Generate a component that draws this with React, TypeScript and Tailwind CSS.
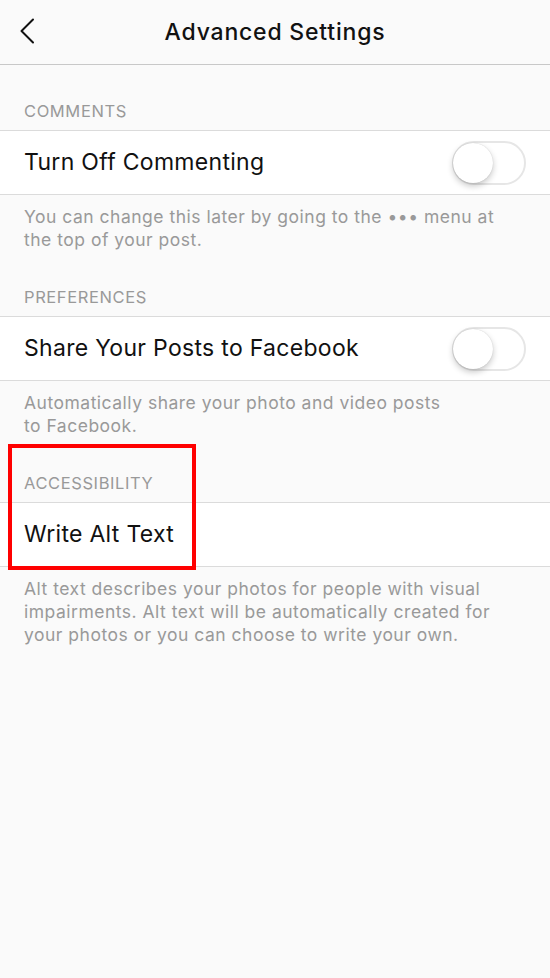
import React from "react";

const font = { fontFamily: "Inter, 'Noto Sans', sans-serif" };

function SectionHeader({ label }: { label: string }) {
  return (
    <div className="h-[65px] flex items-end px-6 pb-[10px]">
      <span className="text-[16.5px] leading-[18px] text-[#999999] tracking-[0.6px]">{label}</span>
    </div>
  );
}

function Toggle() {
  return (
    <div className="w-[74px] h-[44px] rounded-full border-2 border-[#e6e6e6] bg-white relative">
      <div className="absolute left-[-1px] top-[0px] w-[40px] h-[40px] rounded-full bg-white shadow-[0_3px_6px_rgba(0,0,0,0.22),0_0_1px_rgba(0,0,0,0.2)]" />
    </div>
  );
}

function Row({ title, toggle }: { title: string; toggle?: boolean }) {
  return (
    <div className="h-[65px] bg-white border-y border-[#dbdbdb] flex items-center justify-between pl-6 pr-6">
      <span className="text-[23px] tracking-[0.3px] text-[#111111]">{title}</span>
      {toggle && <Toggle />}
    </div>
  );
}

function Description({ children }: { children: React.ReactNode }) {
  return (
    <p className="pl-6 pr-[40px] pt-[10px] text-[17.5px] leading-[23px] tracking-[0.5px] text-[#999999]">{children}</p>
  );
}

export default function App() {
  return (
    <div className="relative w-[550px] h-[978px] bg-[#fafafa]" style={font}>
      {/* Nav bar */}
      <div className="h-[65px] border-b border-[#c8c8c8] flex items-center relative">
        <svg className="absolute left-[18px] top-[18px]" width="20" height="26" viewBox="0 0 20 26" fill="none">
          <polyline points="15,1.5 3.5,13 15,24.5" stroke="#111" strokeWidth="2" strokeLinecap="round" strokeLinejoin="round" />
        </svg>
        <h1 className="w-full text-center text-[23px] tracking-[0.8px] font-medium text-[#111111]">Advanced Settings</h1>
      </div>

      <SectionHeader label="COMMENTS" />
      <Row title="Turn Off Commenting" toggle />
      <Description>
        You can change this later by going to the ••• menu at the top of your post.
      </Description>

      <SectionHeader label="PREFERENCES" />
      <Row title="Share Your Posts to Facebook" toggle />
      <Description>
        Automatically share your photo and video posts
        <br />
        to Facebook.
      </Description>

      <SectionHeader label="ACCESSIBILITY" />
      <Row title="Write Alt Text" />
      <Description>
        Alt text describes your photos for people with visual impairments. Alt text will be automatically created for your photos or you can choose to write your own.
      </Description>

      {/* annotation box */}
      <div className="absolute left-[8px] top-[444px] w-[188px] h-[126px] border-4 border-[#ff0000] pointer-events-none" />
    </div>
  );
}
